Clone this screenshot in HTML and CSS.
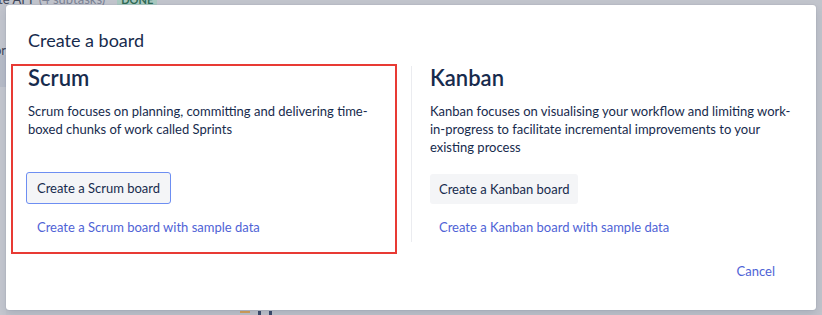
FILE: index.html
```html
<!DOCTYPE html>
<html lang="en">
<head>
<meta charset="utf-8">
<title>Create a board</title>
<link rel="stylesheet" href="styles.css">
</head>
<body>
<div class="backdrop">
  <div class="bg-top"><span class="bg-issue">te API</span><span class="bg-sub">(4 subtasks)</span><span class="bg-lozenge">DONE</span></div>
  <div class="bg-left">
    <span class="bg-l1">or</span>
    <span class="bg-l2">c</span>
  </div>
  <div class="bg-bottom"><span class="bg-orange"></span><span class="bg-v"></span></div>
</div>
<div class="dialog" role="dialog">
  <h1 class="dialog-title">Create a board</h1>
  <div class="dialog-body">
    <section class="board-col board-col--scrum">
      <h2 class="board-name">Scrum</h2>
      <p class="board-desc">Scrum focuses on planning, committing and delivering time-boxed chunks of work called Sprints</p>
      <button class="btn btn--focused">Create a Scrum board</button>
      <a class="sample-link" href="#">Create a Scrum board with sample data</a>
    </section>
    <section class="board-col board-col--kanban">
      <h2 class="board-name">Kanban</h2>
      <p class="board-desc">Kanban focuses on visualising your workflow and limiting work-in-progress to facilitate incremental improvements to your existing process</p>
      <button class="btn">Create a Kanban board</button>
      <a class="sample-link" href="#">Create a Kanban board with sample data</a>
    </section>
  </div>
  <div class="dialog-footer">
    <a class="cancel-link" href="#">Cancel</a>
  </div>
</div>
</body>
</html>
```
FILE: styles.css
```css
* { box-sizing: border-box; }
html, body { margin: 0; padding: 0; }
body {
  width: 822px;
  height: 315px;
  overflow: hidden;
  background: #c1c4cc;
  font-family: Lato, "Liberation Sans", sans-serif;
  color: #172b4d;
  position: relative;
}
.backdrop {
  position: absolute;
  inset: 0;
}
.bg-top {
  position: absolute;
  left: -2px;
  top: -9px;
  font-size: 13px;
  color: #5b6275;
  display: flex;
  gap: 6px;
  align-items: center;
}
.bg-issue { color: #3f4759; }
.bg-sub { color: #7a8194; }
.bg-lozenge {
  margin-left: 6px;
  background: #a9c9c0;
  color: #2f6b55;
  font-size: 11px;
  font-weight: 700;
  padding: 0 4px;
  border-radius: 2px;
}
.bg-left {
  position: absolute;
  left: 0;
  top: 20px;
  width: 6px;
  height: 300px;
  background: #c4c7cf;
}
.bg-l1 { position: absolute; left: -6px; top: 22px; font-size: 13px; color: #3f4759; }
.bg-l2 { position: absolute; left: -3px; top: 38px; font-size: 13px; color: #3f4759; text-decoration: underline; }
.bg-left::after {
  content: "";
  position: absolute;
  left: 0; top: 35px; width: 6px; height: 32px;
  background: #b7bcc8;
}
.bg-bottom { position: absolute; left: 230px; top: 310px; }
.bg-orange { position: absolute; left: 10px; top: 1px; width: 10px; height: 2px; background: #d9a25a; }
.bg-v { position: absolute; left: 28px; top: 1px; width: 14px; height: 6px; border-left: 3px solid #3d4b6b; border-right: 3px solid #3d4b6b; }

.dialog {
  position: absolute;
  left: 6px;
  top: 5px;
  width: 810px;
  height: 305px;
  background: #ffffff;
  border-radius: 3px;
  box-shadow: 0 0 1px rgba(9, 30, 66, 0.31), 0 4px 8px rgba(9, 30, 66, 0.12);
  display: flex;
  flex-direction: column;
}
.dialog-title {
  margin: 0;
  padding: 23px 22px 0;
  font-size: 18px;
  line-height: 24px;
  font-weight: 400;
  color: #172b4d;
}
.dialog-body {
  display: flex;
  align-items: flex-start;
  padding: 12px 24px 0 5px;
}
.board-col {
  display: flex;
  flex-direction: column;
  align-items: flex-start;
}
.board-col--scrum {
  width: 386px;
  border: 2px solid #e83a34;
  padding: 0 15px 10px;
}
.board-col--kanban {
  margin-left: 14px;
  margin-top: 2px;
  border-left: 1px solid #ebecf0;
  padding-left: 18px;
  flex: 1;
}
.board-name {
  margin: 0;
  font-size: 22px;
  line-height: 24px;
  font-weight: 600;
  color: #172b4d;
}
.board-desc {
  margin: 12px 0 0;
  font-size: 13px;
  line-height: 18px;
  min-height: 54px;
  color: #172b4d;
}
.btn {
  margin-top: 18px;
  height: 30px;
  padding: 0 9px;
  border: 0;
  border-radius: 3px;
  background: #f4f5f7;
  color: #172b4d;
  font: inherit;
  font-size: 13px;
  line-height: 30px;
}
.btn--focused {
  margin-top: 16px;
  margin-left: -2px;
  height: 32px;
  padding: 0 10px;
  border: 1px solid #6d8ef2;
  line-height: 30px;
}
.sample-link {
  margin-top: 8px;
  height: 30px;
  padding: 0 9px;
  line-height: 30px;
  font-size: 13px;
  color: #4f63d6;
  text-decoration: none;
}
.dialog-footer {
  display: flex;
  justify-content: flex-end;
  padding: 2px 31px 0 0;
}
.cancel-link {
  height: 30px;
  line-height: 30px;
  padding: 0 10px;
  font-size: 13px;
  color: #4f63d6;
  text-decoration: none;
}
```
